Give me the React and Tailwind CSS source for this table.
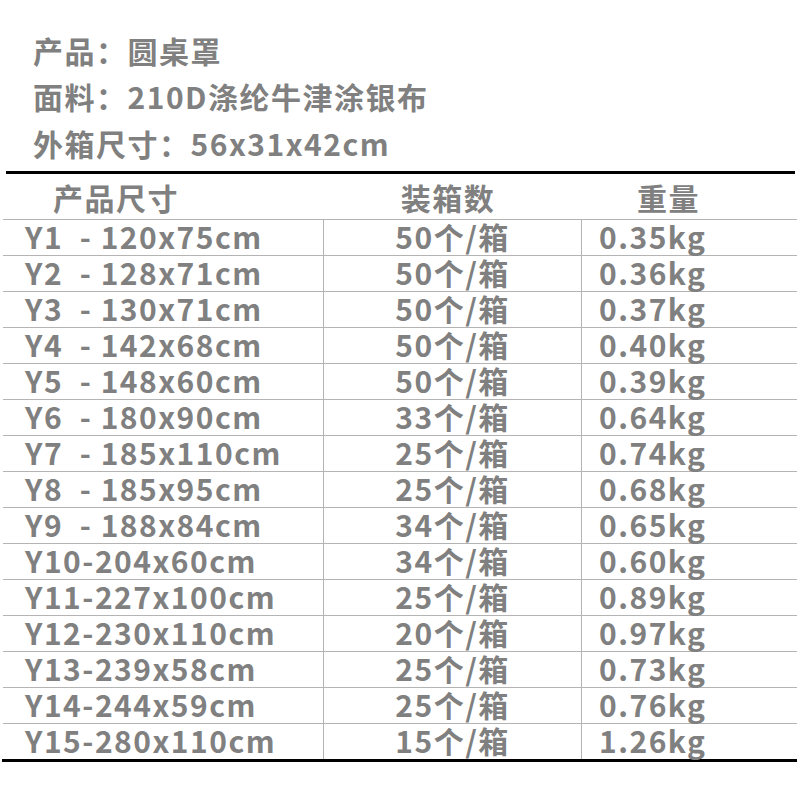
import React from "react";

const rows = [
  ["Y1  - 120x75cm", "50个/箱", "0.35kg"],
  ["Y2  - 128x71cm", "50个/箱", "0.36kg"],
  ["Y3  - 130x71cm", "50个/箱", "0.37kg"],
  ["Y4  - 142x68cm", "50个/箱", "0.40kg"],
  ["Y5  - 148x60cm", "50个/箱", "0.39kg"],
  ["Y6  - 180x90cm", "33个/箱", "0.64kg"],
  ["Y7  - 185x110cm", "25个/箱", "0.74kg"],
  ["Y8  - 185x95cm", "25个/箱", "0.68kg"],
  ["Y9  - 188x84cm", "34个/箱", "0.65kg"],
  ["Y10-204x60cm", "34个/箱", "0.60kg"],
  ["Y11-227x100cm", "25个/箱", "0.89kg"],
  ["Y12-230x110cm", "20个/箱", "0.97kg"],
  ["Y13-239x58cm", "25个/箱", "0.73kg"],
  ["Y14-244x59cm", "25个/箱", "0.76kg"],
  ["Y15-280x110cm", "15个/箱", "1.26kg"],
];

export default function App() {
  return (
    <div
      className="w-[800px] h-[800px] bg-white text-[#808080] font-bold"
      style={{ fontFamily: '"Noto Sans CJK SC", "Noto Sans", sans-serif' }}
    >
      <div className="h-[171px] pl-[33px] pt-[26.5px] text-[30px] leading-[46.5px] tracking-[1.5px]">
        <div>产品：圆桌罩</div>
        <div>面料：210D涤纶牛津涂银布</div>
        <div>外箱尺寸：56x31x42cm</div>
      </div>
      <div className="ml-[6px] mr-[5px] h-[3px] bg-black" />
      <div className="ml-[3px] mr-[3px]">
        <div className="grid grid-cols-[320px_258px_216px] h-[45px] pt-[8px] text-[30px] leading-[30px] tracking-[1.5px]">
          <div className="pl-[50px]">产品尺寸</div>
          <div className="text-center pr-[8px]">装箱数</div>
          <div className="pl-[56px]">重量</div>
        </div>
        {rows.map((r, i) => (
          <div
            key={i}
            className="grid grid-cols-[320px_258px_216px] h-[36px] border-t border-[#b4b4b4] text-[30px] leading-[33px] tracking-[1.5px]"
          >
            <div className="pl-[22px] whitespace-pre">{r[0]}</div>
            <div className="text-center border-l border-[#b4b4b4]">{r[1]}</div>
            <div className="pl-[17px] border-l border-[#b4b4b4]">{r[2]}</div>
          </div>
        ))}
      </div>
      <div className="ml-[2px] mr-[3px] h-[3px] bg-black" />
    </div>
  );
}
